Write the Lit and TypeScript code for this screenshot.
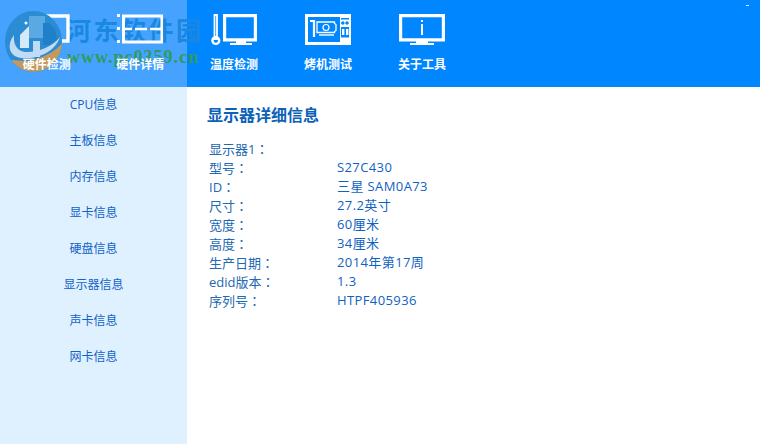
import { LitElement, html, css, svg } from "lit";
import { customElement } from "lit/decorators.js";

const tabs = [
  {
    label: "硬件检测", on: true,
    icon: svg`<path d="M2 16h42v25H2z" fill="none" stroke="#fff" stroke-width="3.400"/><path d="M19 43h10v2H19z" fill="#fff"/>`,
  },
  {
    label: "硬件详情", on: true,
    icon: svg`<path d="M0 14h3v3H0zM0 27h3v3H0zM0 40h3v3H0z" fill="#fff"/>
      <path d="M6.500 16h38.500v26H6.500z" fill="none" stroke="#fff" stroke-width="3"/>
      <path d="M7 29h8M18 29h12M33 29h11" stroke="#fff" stroke-width="2.400"/>`,
  },
  {
    label: "温度检测", on: false,
    icon: svg`<path d="M3.500 15h2.500v24H3.500z" fill="none" stroke="#fff" stroke-width="1.800"/><circle cx="4.800" cy="40.500" r="3.400" fill="none" stroke="#fff" stroke-width="2.400"/>
      <path d="M13.600 15.600h30.800v24.300H13.600z" fill="none" stroke="#fff" stroke-width="3.200"/><path d="M25 41h10v2h6v2H19v-2h6z" fill="#fff"/>`,
  },
  {
    label: "烤机测试", on: false,
    icon: svg`<path d="M1.500 15.500h43v28h-43z" fill="none" stroke="#fff" stroke-width="3"/><path d="M35 15h10v29H35z" fill="#fff"/>
      <path d="M36 18h8v1.500h-8zM36 27h8v10.500h-8z" fill="#0086ff"/><circle cx="37.800" cy="23" r="1.800" fill="#0086ff"/><circle cx="42" cy="23" r="1.800" fill="#0086ff"/>
      <path d="M37 29h2.400v6H37zM41 29h2.400v6H41z" fill="#fff"/>
      <path d="M5 21h4v16" fill="none" stroke="#fff" stroke-width="2.200"/>
      <path d="M12 22h17.500v1.500l1.500 1v6l-1.500 1v1H12z" fill="none" stroke="#fff" stroke-width="1.300"/><circle cx="21" cy="27.500" r="3" fill="none" stroke="#fff" stroke-width="1.200"/><path d="M14 35h15" stroke="#fff" stroke-width="1.400"/>`,
  },
  {
    label: "关于工具", on: false,
    icon: svg`<path d="M1.600 15.600h42.800v24.300H1.600z" fill="none" stroke="#fff" stroke-width="3.200"/><path d="M22 20h2v2h-2zM22 24h2v11h-2z" fill="#fff"/><path d="M17 41h12v2h6v2H11v-2h6z" fill="#fff"/>`,
  },
];

const side = ["CPU信息", "主板信息", "内存信息", "显卡信息", "硬盘信息", "显示器信息", "声卡信息", "网卡信息"];
const rows: [string, string][] = [
  ["显示器1", ""],
  ["型号", "S27C430"],
  ["ID", "三星 SAM0A73"],
  ["尺寸", "27.2英寸"],
  ["宽度", "60厘米"],
  ["高度", "34厘米"],
  ["生产日期", "2014年第17周"],
  ["edid版本", "1.3"],
  ["序列号", "HTPF405936"],
];

@customElement("app-root")
export class AppRoot extends LitElement {
  static styles = css`
    :host { display: block; width: 760px; height: 444px; position: relative; overflow: hidden; background: #fff; font-family: "Open Sans", "Noto Sans CJK SC", sans-serif; }
    .top { height: 87px; background: #0086ff; display: flex; position: relative; }
    .tabs { display: flex; }
    .tab { width: 94px; height: 87px; display: flex; flex-direction: column; align-items: center; color: #fff; font-size: 12px; font-weight: 700; line-height: 16px; }
    .tab.on { background: #45a3ff; width: 93.500px; }
    .tab svg { display: block; width: 46px; height: 50px; position: relative; z-index: 2; }
    .tab span { margin-top: 7px; position: relative; z-index: 4; }
    .dot { position: absolute; right: 11px; top: 5px; width: 3px; height: 1px; background: #dff1ff; }
    .main { display: flex; height: 357px; }
    .side { width: 187px; background: #dff1ff; }
    .side div { height: 36px; line-height: 36px; text-align: center; font-size: 12px; color: #1262c8; }
    .detail { padding: 17px 0 0 20px; color: #0f62c4; flex: 1; }
    h1 { margin: 0 0 13px; font-size: 16px; line-height: 22px; font-weight: 700; color: #0b62b8; }
    .row { display: flex; height: 19px; line-height: 19px; font-size: 13px; padding-left: 2px; }
    .k { width: 128px; color: #2268b2; }
    .v { letter-spacing: 0.4px; }
    .colon { font-family: "Noto Sans CJK TC", sans-serif; }
    .logo { position: absolute; left: 5px; top: 11px; z-index: 3; }
    .wt { position: absolute; left: 66px; top: 12px; z-index: 1; font: 700 25px/34px "Noto Sans CJK SC", sans-serif; letter-spacing: 2.500px; color: #1a88e0; white-space: nowrap; }
    .wu { position: absolute; left: 67px; top: 47px; z-index: 1; font: 700 18px/20px "Liberation Serif", serif; letter-spacing: 1px; color: #2f9a63; white-space: nowrap; }
  `;

  render() {
    return html`
      <div class="top">
        <div class="tabs">
          ${tabs.map(
            (t) => html`<div class="tab ${t.on ? "on" : ""}"><svg viewBox="0 0 46 50">${t.icon}</svg><span>${t.label}</span></div>`
          )}
        </div>
        <div class="dot"></div>
        <svg class="logo" width="58" height="62" viewBox="0 0 58 62">
          <ellipse cx="28.500" cy="30.500" rx="28.500" ry="30.500" fill="#2b8bd3"/>
          <path d="M6 49a28.500 30.500 0 0 0 51-17c-6 9-24 17-36 18z" fill="#c39a5e"/>
          <path d="M9 24C2 33 3 45 16 47c16 2 34-6 39-21-7 10-24 16-35 15-8-1-12-8-11-17z" fill="#bfdcf4"/>
          <path d="M15 24l9-9v22H15z" fill="#d6e9f8"/>
          <path d="M24 5h16v22H24z" fill="#6bb3ea" opacity=".75"/>
          <path d="M38 12h6l6 6 2 10-8 6h-6z" fill="#1f7fc8"/>
          <path d="M28 30h7v16h-7z" fill="#bfdcf4"/>
          <circle cx="21" cy="12" r="1.500" fill="#fff"/>
        </svg>
        <div class="wt">河东软件园</div>
        <div class="wu">www.pc0359.cn</div>
      </div>
      <div class="main">
        <div class="side">${side.map((s) => html`<div>${s}</div>`)}</div>
        <div class="detail">
          <h1>显示器详细信息</h1>
          ${rows.map(([k, v]) => html`<div class="row"><div class="k">${k}<span class="colon">：</span></div><div class="v">${v}</div></div>`)}
        </div>
      </div>
    `;
  }
}
